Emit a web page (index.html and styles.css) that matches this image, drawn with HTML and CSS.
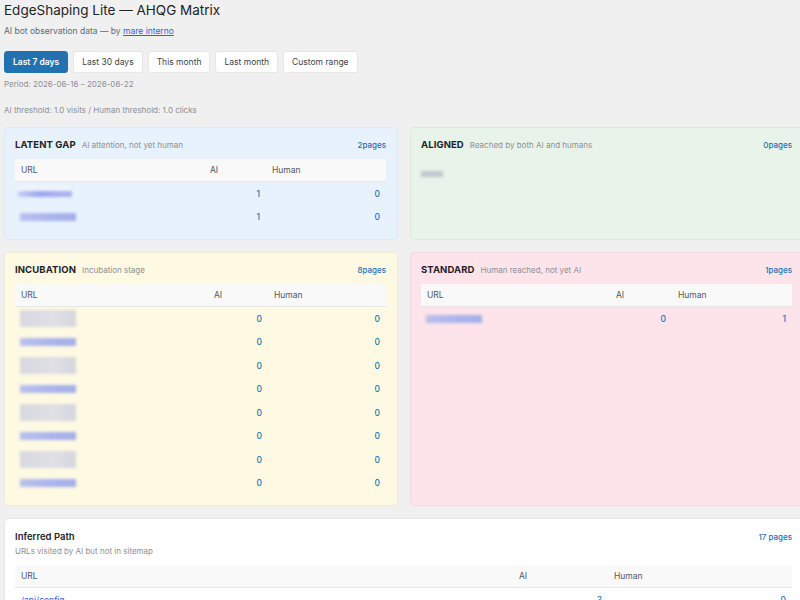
FILE: index.html
```html
<!DOCTYPE html>
<html>
<head>
<meta charset="utf-8">
<link rel="stylesheet" href="styles.css">
</head>
<body>
<div class="wrap">
  <h1 class="title">EdgeShaping Lite — AHQG Matrix</h1>
  <p class="sub">AI bot observation data — by <a class="credit" href="#">mare interno</a></p>
  <div class="ranges">
    <button class="btn active">Last 7 days</button>
    <button class="btn">Last 30 days</button>
    <button class="btn">This month</button>
    <button class="btn">Last month</button>
    <button class="btn">Custom range</button>
  </div>
  <p class="period">Period: 2026-06-16 – 2026-06-22</p>
  <p class="threshold">AI threshold: 1.0 visits / Human threshold: 1.0 clicks</p>

  <div class="matrix">
    <section class="card latent">
      <div class="card-head"><span class="name">LATENT GAP</span><span class="desc">AI attention, not yet human</span><span class="count">2pages</span></div>
      <table class="tbl">
        <thead><tr><th class="c-url">URL</th><th class="c-ai">AI</th><th class="c-hu">Human</th></tr></thead>
        <tbody>
          <tr><td><span class="redact text"></span></td><td class="num">1</td><td class="num">0</td></tr>
          <tr><td><span class="redact bar"></span></td><td class="num">1</td><td class="num">0</td></tr>
        </tbody>
      </table>
    </section>
    <section class="card aligned">
      <div class="card-head"><span class="name">ALIGNED</span><span class="desc">Reached by both AI and humans</span><span class="count">0pages</span></div>
      <div class="empty"><span class="redact none"></span></div>
    </section>
    <section class="card incubation">
      <div class="card-head"><span class="name">INCUBATION</span><span class="desc">Incubation stage</span><span class="count">8pages</span></div>
      <table class="tbl">
        <thead><tr><th class="c-url">URL</th><th class="c-ai">AI</th><th class="c-hu">Human</th></tr></thead>
        <tbody>
          <tr><td><span class="redact block"></span></td><td class="num">0</td><td class="num">0</td></tr>
          <tr><td><span class="redact bar"></span></td><td class="num">0</td><td class="num">0</td></tr>
          <tr><td><span class="redact block"></span></td><td class="num">0</td><td class="num">0</td></tr>
          <tr><td><span class="redact bar"></span></td><td class="num">0</td><td class="num">0</td></tr>
          <tr><td><span class="redact block"></span></td><td class="num">0</td><td class="num">0</td></tr>
          <tr><td><span class="redact bar"></span></td><td class="num">0</td><td class="num">0</td></tr>
          <tr><td><span class="redact block"></span></td><td class="num">0</td><td class="num">0</td></tr>
          <tr><td><span class="redact bar"></span></td><td class="num">0</td><td class="num">0</td></tr>
        </tbody>
      </table>
    </section>
    <section class="card standard">
      <div class="card-head"><span class="name">STANDARD</span><span class="desc">Human reached, not yet AI</span><span class="count">1pages</span></div>
      <table class="tbl">
        <thead><tr><th class="c-url">URL</th><th class="c-ai">AI</th><th class="c-hu">Human</th></tr></thead>
        <tbody>
          <tr><td><span class="redact bar"></span></td><td class="num">0</td><td class="num">1</td></tr>
        </tbody>
      </table>
    </section>
  </div>

  <section class="card inferred">
    <div class="inf-head">
      <div>
        <h2 class="inf-title">Inferred Path</h2>
        <p class="inf-desc">URLs visited by AI but not in sitemap</p>
      </div>
      <span class="count">17 pages</span>
    </div>
    <table class="tbl wide">
      <thead><tr><th class="c-url">URL</th><th class="c-ai">AI</th><th class="c-hu">Human</th></tr></thead>
      <tbody>
        <tr><td><a class="path" href="#">/api/config</a></td><td class="num">3</td><td class="num">0</td></tr>
      </tbody>
    </table>
  </section>
</div>
</body>
</html>
```

FILE: styles.css
```css
html, body {
  margin: 0;
  padding: 0;
  background: #f0f0f1;
  overflow-x: hidden;
}
body {
  font-family: Inter, "Noto Sans", sans-serif;
  color: #1d2327;
  font-size: 8.5px;
}
.wrap {
  width: 800px;
  padding: 0 0 0 4px;
}
.title {
  margin: 0;
  padding-top: 1px;
  font-size: 13.5px;
  font-weight: 400;
  line-height: 19px;
  color: #1d2327;
}
.sub {
  margin: 4px 0 0;
  color: #646970;
  line-height: 14px;
}
.credit {
  color: #3b5bdb;
  text-decoration: underline;
}
.ranges {
  display: flex;
  gap: 5px;
  margin-top: 13px;
}
.btn {
  font-family: inherit;
  font-size: 8.5px;
  height: 22px;
  padding: 0 8px;
  border: 1px solid #e6e6e8;
  border-radius: 3px;
  background: #fff;
  color: #3c434a;
  cursor: pointer;
}
.btn.active {
  background: #2271b1;
  border-color: #2271b1;
  color: #fff;
  font-weight: 600;
}
.period {
  margin: 5px 0 0;
  color: #8c8f94;
  font-size: 8px;
  line-height: 12px;
}
.threshold {
  margin: 14px 0 0;
  color: #8c8f94;
  font-size: 8px;
  line-height: 12px;
}
.matrix {
  margin-top: 11px;
  display: grid;
  grid-template-columns: 1fr 1fr;
  gap: 12px;
}
.card {
  border: 1px solid #e4e6ea;
  border-radius: 4px;
  padding: 10px 11px 10px 10px;
}
.latent { background: #e7f2fd; border-color: #dde9f5; }
.aligned { background: #e8f4ea; border-color: #dde9df; }
.incubation { background: #fef9e2; border-color: #f1ecd4; }
.standard { background: #fce4ea; border-color: #f2dae0; }
.card-head {
  display: flex;
  align-items: baseline;
  height: 14px;
  line-height: 14px;
  margin-bottom: 7px;
}
.name {
  font-weight: 700;
  font-size: 9.5px;
  color: #1d2327;
  letter-spacing: 0.1px;
}
.desc {
  margin-left: 6px;
  color: #8c8f94;
  font-size: 8px;
}
.count {
  margin-left: auto;
  color: #2271b1;
  font-weight: 500;
  font-size: 8px;
}
.tbl {
  width: 100%;
  border-collapse: collapse;
}
.tbl th {
  background: #f9f9f9;
  text-align: left;
  font-weight: 400;
  color: #50575e;
  height: 22px;
  padding: 0 6px;
  border-bottom: 1px solid #e6e6e6;
}
.tbl td {
  height: 23.5px;
  padding: 0 6px;
}
.c-ai { width: 50px; }
.c-hu { width: 108px; }
.incubation .c-ai { width: 48px; }
.incubation .c-hu { width: 106px; }
.wide .c-ai { width: 83px; }
.wide .c-hu { width: 172px; }
.num {
  text-align: right;
  color: #2271b1;
  font-weight: 500;
}
.redact {
  display: block;
  filter: blur(1.6px);
}
.redact.text {
  width: 54px;
  height: 6px;
  margin-left: -3px;
  background: linear-gradient(90deg, #c5cff3 0%, #9aa6ef 40%, #aeb6f0 100%);
  box-shadow: 0 -5px 0 #f1f4fb;
}
.redact.bar {
  width: 56px;
  height: 8px;
  margin-left: -1px;
  background: linear-gradient(90deg, #b9c0ec 0%, #aab3ec 60%, #a6aee9 100%);
}
.redact.block {
  width: 56px;
  height: 17px;
  margin-left: -1px;
  background: linear-gradient(90deg, #d8d9e1 0%, #dfdfe5 60%, #d6d7df 100%);
}
.redact.none {
  width: 22px;
  height: 6px;
  background: #c3c6c9;
}
.empty {
  padding: 12px 0 0 0;
}
.inferred {
  margin-top: 12px;
  background: #fff;
  border-color: #e6e6e8;
  padding-top: 11px;
}
.inf-head {
  display: flex;
  align-items: flex-start;
  margin-bottom: 8px;
}
.inf-head .count {
  margin-top: 2px;
}
.inf-title {
  margin: 0;
  font-size: 9.5px;
  font-weight: 600;
  line-height: 13px;
}
.inf-desc {
  margin: 3px 0 0;
  color: #8c8f94;
  font-size: 8px;
  line-height: 11px;
}
.path {
  color: #3b5bdb;
  text-decoration: none;
}
```
